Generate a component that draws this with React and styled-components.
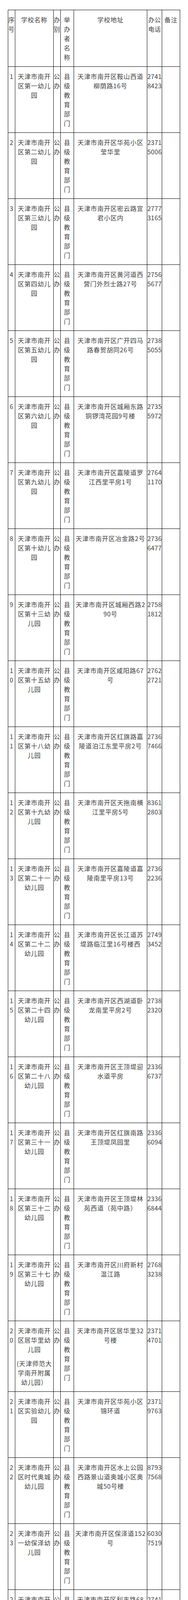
import React from "react";
import styled, { createGlobalStyle } from "styled-components";

const GlobalStyle = createGlobalStyle`
  html, body {
    margin: 0;
    padding: 0;
    background: #fff;
  }
  body {
    font-family: "Noto Sans CJK SC", "Liberation Sans", sans-serif;
  }
`;

const Page = styled.div`
  padding: 25px 0 0 20px;
`;

const Table = styled.table`
  width: 439px;
  table-layout: fixed;
  border-collapse: collapse;
  color: #3e3e3e;
  font-family: "Noto Sans CJK SC", "Liberation Sans", sans-serif;
  font-size: 16px;
  line-height: 24px;
  letter-spacing: 0.8px;
  word-break: break-all;
`;

const Col = styled.col`
  width: ${(p) => p.$w}px;
`;

// horizontal padding differs per column, vertical is always 12px
const padX = { no: 0, name: 0, type: 0, org: 4, addr: 2, phone: 0, note: 0 };

const Cell = styled.td`
  border: 1px solid #000;
  padding: 12px ${(p) => padX[p.$col]}px;
  vertical-align: top;
  text-align: center;
  letter-spacing: ${(p) => (p.$col === "phone" ? "0.3px" : "inherit")};
`;

const HeadCell = styled(Cell).attrs({ as: "th" })`
  font-weight: normal;
`;

const Para = styled.div`
  & + & {
    margin-top: 12px;
  }
`;

const widths = [18, 98, 18, 34, 187, 38, 46];

const edu = (no, name, addr, phone) => ({ no, name, type: "公办", org: "县级教育部门", addr, phone });

const rows = [
  edu(1, "天津市南开区第一幼儿园", "天津市南开区鞍山西道柳荫路16号", "27418423"),
  edu(2, "天津市南开区第二幼儿园", "天津市南开区华苑小区莹华里", "23715006"),
  edu(3, "天津市南开区第三幼儿园", "天津市南开区密云路宜君小区内", "27773165"),
  edu(4, "天津市南开区第四幼儿园", "天津市南开区黄河道西营门外烈士路27号", "27565677"),
  edu(5, "天津市南开区第五幼儿园", "天津市南开区广开四马路春贺胡同26号", "27385055"),
  edu(6, "天津市南开区第六幼儿园", "天津市南开区城厢东路铜锣湾花园9号楼", "27355972"),
  edu(7, "天津市南开区第九幼儿园", "天津市南开区嘉陵道罗江西里平房1号", "27641170"),
  edu(8, "天津市南开区第十幼儿园", "天津市南开区冶金路2号", "27366477"),
  edu(9, "天津市南开区第十三幼儿园", "天津市南开区城厢西路290号", "27581812"),
  edu(10, "天津市南开区第十五幼儿园", "天津市南开区咸阳路67号", "27622721"),
  edu(11, "天津市南开区第十八幼儿园", "天津市南开区红旗路嘉陵道泊江东里平房2号", "27367466"),
  edu(12, "天津市南开区第十九幼儿园", "天津市南开区天拖南横江里平房5号", "83612803"),
  edu(13, "天津市南开区第二十一幼儿园", "天津市南开区嘉陵道嘉陵南里平房13号", "27362236"),
  edu(14, "天津市南开区第二十二幼儿园", "天津市南开区长江道苏堤路临江里16号楼西", "27493452"),
  edu(15, "天津市南开区第二十四幼儿园", "天津市南开区西湖道卧龙南里平房2号", "27382320"),
  edu(16, "天津市南开区第二十八幼儿园", "天津市南开区王顶堤迎水道平房", "23366737"),
  edu(17, "天津市南开区第三十一幼儿园", "天津市南开区红旗南路王顶堤凤园里", "23366094"),
  edu(18, "天津市南开区第三十二幼儿园", "天津市南开区王顶堤林苑西道（苑中路）", "23366844"),
  edu(19, "天津市南开区第三十七幼儿园", "天津市南开区川府新村温江路", "27683238"),
  edu(20, ["天津市南开区居华里幼儿园", "(天津师范大学南开附属幼儿园）"], "天津市南开区居华里32号楼", "23714701"),
  edu(21, "天津市南开区实验幼儿园", "天津市南开区华苑小区锦环道", "23719763"),
  edu(22, "天津市南开区时代奥城幼儿园", "天津市南开区水上公园西路景山道奥城小区奥城50号楼", "87937568"),
  edu(23, "天津市南开一幼保泽幼儿园", "天津市南开区保泽道152号", "60307519"),
  edu(24, "天津市南开一幼中南幼儿园", "天津市南开区利丰路68号", "27417427"),
  edu(25, "天津市南开区第三幼儿园分园", "天津市南开区汾水道西头立新里2号", "87536618"),
  edu(26, "天津市南开四幼临汾幼儿园", "天津市南开区临汾路5号", "27565677"),
  edu(27, "天津市南开区第十三幼儿园分园", "天津市南开区二纬路聚英里楼群内", "27240865"),
  edu(28, "天津市南开区第十九幼儿园分园", "天津市南开区天拖南淦江西里平房6号", "83612803"),
  edu(29, "天津市南开区第二十四幼儿园分园", "天津市南开区玉泉路五云里2号", "27383842"),
  { no: 30, name: "天津市南开区百花幼儿园", type: "公办", org: "集体", addr: "天津市南开区复康路荣迁东里8号楼对面", phone: "23612438" },
  { no: 31, name: "天津大学幼儿园", type: "公办", org: "事业单位", addr: "天津市南开区卫津路92号", phone: "27403454" },
  { no: 32, name: "南开大学幼儿园", type: "公办", org: "事业单位", addr: "天津市南开区卫津路94号", phone: "23508328" },
  { no: 33, name: "天津市聋儿康复中心", type: "公办", org: "事业单位", addr: "天津市南开区卫津南路66号", phone: "59188590" },
  { no: 34, name: "天津市南开区第一保育院", type: "公办", org: "县级其他部门", addr: "天津市南开区黄河道立新里1号", phone: "27365678" },
  { no: 35, name: "天津市南开区第二保育院", type: "公办", org: "县级其他部门", addr: "天津市南开区天拖南澄江路", phone: "23613305" },
  { no: 36, name: "天津市南开区第三保育院", type: "公办", org: "县级其他部门", addr: "天津市南开区王顶堤凤园里", phone: "23364720" },
  { no: 37, name: "天津市南开区第四保育院", type: "公办", org: "县级其他部门", addr: "天津市南开区白堤路湖镜道3号", phone: "27484704-8001" },
  { no: 38, name: "天津市南开区天才幼儿园", type: "民办", org: "民办", addr: "天津市南开区红旗路元阳道3号禧顺花园内", phone: "87611982", note: "普惠性民办幼儿园" },
  { no: 39, name: "天津市南开区华苑实验幼儿园", type: "民办", org: "民办", addr: "天津市南开区华苑地华里小区内", phone: "23716771" },
  { no: 40, name: "天津博瀚幼儿园有限公司", type: "民办", org: "民办", addr: "天津市南开区华苑居华里望云道1号", phone: "23720771" },
  { no: 41, name: "天津市南开区华英星辰幼儿园", type: "民办", org: "民办", addr: "天津市南开区兰坪路8号", phone: "87614626", note: "普惠性民办幼儿园" },
  { no: 42, name: "天津市南开区华英星辰二马路幼儿园", type: "民办", org: "民办", addr: "天津市南开区南开二马路86号", phone: "27244875", note: "普惠性民办幼儿园" },
  { no: 43, name: "天津市南开区奥兹久华里幼儿园", type: "民办", org: "民办", addr: "天津市南开区华苑久华里小区21号楼东侧", phone: "23724189" },
  { no: 44, name: "天津市南开区伊顿慧智幼儿园", type: "民办", org: "民办", addr: "天津市南开区老城厢东马路静德花园2号楼", phone: "87583375" },
  { no: 45, name: "天津市南开区贝尔幼儿园有限公司", type: "民办", org: "民办", addr: "天津市南开区南丰路清新园小区内", phone: "27418090" },
];

const heads = [
  ["no", "序号"],
  ["name", "学校名称"],
  ["type", "办别"],
  ["org", "举办者名称"],
  ["addr", "学校地址"],
  ["phone", "办公电话"],
  ["note", "备注"],
];

function NameCell({ name }) {
  const parts = Array.isArray(name) ? name : [name];
  return (
    <Cell $col="name">
      {parts.map((p) => (
        <Para key={p}>{p}</Para>
      ))}
    </Cell>
  );
}

export default function App() {
  return (
    <Page>
      <GlobalStyle />
      <Table>
        <colgroup>
          {widths.map((w, i) => (
            <Col key={i} $w={w} />
          ))}
        </colgroup>
        <thead>
          <tr>
            {heads.map(([col, label]) => (
              <HeadCell key={col} $col={col}>
                {label}
              </HeadCell>
            ))}
          </tr>
        </thead>
        <tbody>
          {rows.map((r) => (
            <tr key={r.no}>
              <Cell $col="no">{r.no}</Cell>
              <NameCell name={r.name} />
              <Cell $col="type">{r.type}</Cell>
              <Cell $col="org">{r.org}</Cell>
              <Cell $col="addr">{r.addr}</Cell>
              <Cell $col="phone">{r.phone}</Cell>
              <Cell $col="note">{r.note}</Cell>
            </tr>
          ))}
        </tbody>
      </Table>
    </Page>
  );
}
